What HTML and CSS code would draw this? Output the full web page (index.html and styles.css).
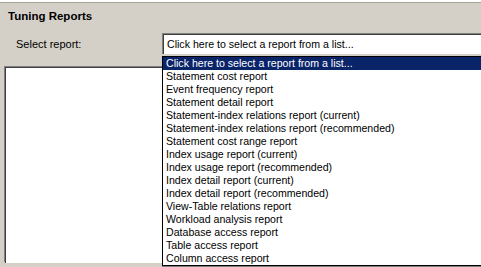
FILE: index.html
```html
<!DOCTYPE html>
<html lang="en">
<head>
  <meta charset="UTF-8" />
  <title>Tuning Reports</title>
  <link rel="stylesheet" href="styles.css">
</head>
<body>
  <div class="top-edge"></div>
  <h1 class="group-title">Tuning Reports</h1>

  <!-- Report picker -->
  <div class="picker-row">
    <label class="picker-label" for="report">Select report:</label>
    <div class="combo" id="report">Click here to select a report from a list...</div>
  </div>

  <div class="report-view"></div>

  <!-- Open dropdown list -->
  <ul class="combo-list">
    <li class="selected">Click here to select a report from a list...</li>
    <li>Statement cost report</li>
    <li>Event frequency report</li>
    <li>Statement detail report</li>
    <li>Statement-index relations report (current)</li>
    <li>Statement-index relations report (recommended)</li>
    <li>Statement cost range report</li>
    <li>Index usage report (current)</li>
    <li>Index usage report (recommended)</li>
    <li>Index detail report (current)</li>
    <li>Index detail report (recommended)</li>
    <li>View-Table relations report</li>
    <li>Workload analysis report</li>
    <li>Database access report</li>
    <li>Table access report</li>
    <li>Column access report</li>
  </ul>
</body>
</html>
```

FILE: styles.css
```css
/* Reset */
*, *::before, *::after {
  box-sizing: border-box;
}

body {
  margin: 0;
  width: 481px;
  height: 267px;
  overflow: hidden;
  position: relative;
  background: #d4d0c8;
  font-family: 'Liberation Sans', Arial, sans-serif;
  font-size: 10.6px;
  color: #000;
}

.top-edge {
  height: 3px;
  background: #fff;
  border-bottom: 1px solid #a8a49c;
}

.group-title {
  margin: 0;
  padding: 6px 0 0 8px;
  height: 30px;
  font-size: 11.5px;
  font-weight: 700;
  line-height: 14px;
}

/* Picker */
.picker-row {
  display: flex;
  align-items: center;
  height: 21px;
}

.picker-label {
  flex: none;
  width: 162px;
  padding-left: 16px;
  font-size: 11px;
}

.combo {
  flex: none;
  width: 340px;
  height: 21px;
  padding: 3px 0 0 4px;
  background: #fff;
  border-top: 1px solid #808080;
  border-left: 1px solid #808080;
  box-shadow: inset 1px 1px 0 #404040;
  white-space: nowrap;
  line-height: 14px;
}

.report-view {
  margin: 13px 0 0 5px;
  height: 196px;
  background: #fff;
  border-top: 1px solid #404040;
  border-left: 1px solid #404040;
  box-shadow: -1px -1px 0 #808080;
}

/* Dropdown */
.combo-list {
  position: absolute;
  top: 56px;
  left: 162px;
  width: 319px;
  margin: 0;
  padding: 0;
  list-style: none;
  background: #fff;
  border: 1px solid #000;
  border-right: none;
  box-shadow: 0 1px 0 #808080;
}

.combo-list li {
  height: 13px;
  line-height: 13px;
  padding-left: 3px;
  white-space: nowrap;
}

.combo-list li.selected {
  background: #0a246a;
  color: #fff;
}
```
